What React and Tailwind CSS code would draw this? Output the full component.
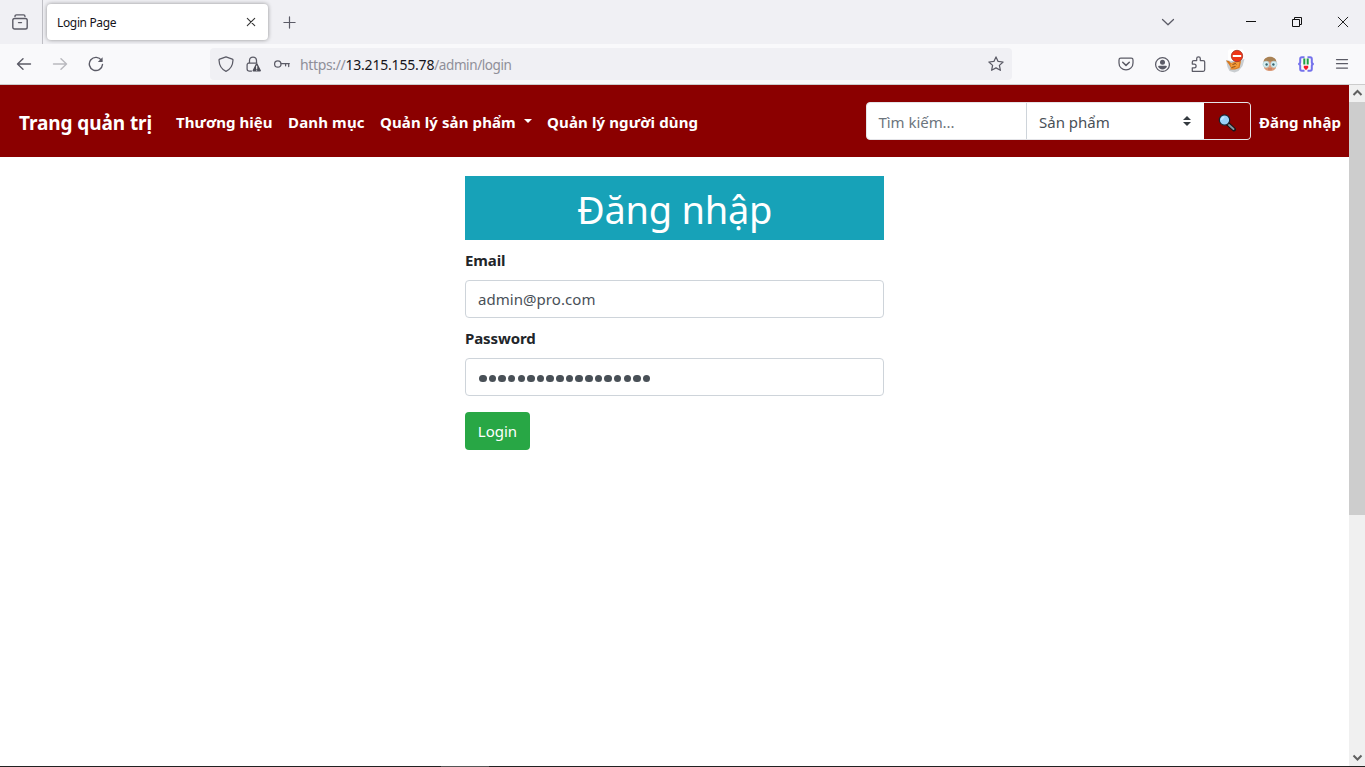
import React from "react";

function Icon({ children, className = "" }) {
  return (
    <svg
      viewBox="0 0 16 16"
      className={`block size-4 shrink-0 ${className}`}
      fill="none"
      stroke="#5b5b66"
      strokeWidth="1.25"
      strokeLinecap="round"
      strokeLinejoin="round"
    >
      {children}
    </svg>
  );
}

function TabStrip() {
  return (
    <div className="flex h-11 items-center bg-[#f0f0f4]">
      <div className="flex h-11 w-[43px] items-center border-r border-[#bfbfc5] pl-3">
        <Icon>
          <path d="M3 2.500c0-1 .6-1.600 1.500-1.600h7c.9 0 1.500.6 1.500 1.600" strokeWidth="1.400" />
          <rect x=".8" y="4.500" width="14.400" height="10.500" rx="1.800" strokeWidth="1.400" />
          <path d="M6.500 8.600h3" strokeWidth="1.400" />
        </Icon>
      </div>
      <div className="ml-1 flex h-9 w-[221px] items-center rounded bg-white pr-[9px] pl-[10px] shadow-[0_0_4px_rgba(0,0,0,0.4)]">
        <span className="w-[70px] pt-0.5 text-[12px] leading-4 tracking-[-0.35px] whitespace-nowrap text-[#15141a]">
          Login Page
        </span>
        <Icon className="ml-auto">
          <path d="M4.300 4.300l7.400 7.400M11.700 4.300l-7.400 7.400" stroke="#333" strokeWidth="1.100" />
        </Icon>
      </div>
      <Icon className="ml-[13px]">
        <path d="M8.500 2.900v11.200M2.900 8.500h11.200" strokeWidth="1.200" />
      </Icon>
      <div className="ml-auto flex items-center pr-[14px]">
        <Icon className="mr-[67px]">
          <path d="M2.500 5.500L8 10.800l5.500-5.300" />
        </Icon>
        <Icon className="mr-[30px]">
          <path d="M3 7.500h10" stroke="#111" strokeWidth="1" strokeLinecap="butt" />
        </Icon>
        <Icon className="mr-[30px]">
          <path
            d="M3.500 5.500h7v7h-7zM5.500 5.500v-2h7v7h-2"
            stroke="#111"
            strokeWidth="1"
            strokeLinejoin="miter"
            strokeLinecap="butt"
          />
        </Icon>
        <Icon>
          <path d="M3.200 3.200l9.600 9.600M12.800 3.200l-9.600 9.600" stroke="#222" strokeWidth="1" />
        </Icon>
      </div>
    </div>
  );
}

function FoxIcon() {
  return (
    <svg viewBox="0 0 20 24" className="block h-6 w-5 shrink-0">
      <rect x="3" y="0" width="16" height="13" rx="3" fill="#fff" />
      <path d="M1 11l5 1 9-1 4.500-1-2 7-4 5-4 1.500-5-1.500-2-4z" fill="#c9cdd0" />
      <path d="M1 11.500l3 .5 2 2 9-2.500 1 1-1.500 6.500-4.500 1.500H5l1-1.500-2-3.500z" fill="#d8781e" />
      <path d="M5.500 14.500l9-2-1 5.500-3.500 1.500H6z" fill="#f39a38" />
      <path d="M7.500 15.500l3-1 .8 1M6.500 18.500l4-1" stroke="#7c4214" strokeWidth=".9" fill="none" />
      <circle cx="12" cy="7" r="5.700" fill="#ee3416" stroke="#a13225" strokeWidth=".8" />
      <rect x="7.800" y="6" width="8.400" height="2" fill="#fff" />
    </svg>
  );
}

function FaceIcon() {
  return (
    <svg viewBox="0 0 16 16" className="block size-4 shrink-0">
      <path d="M2 6c0-3 3-5 6-5s6 2 6 5v5c0 2.500-3 4-6 4s-6-1.500-6-4z" fill="#dc9b78" />
      <path d="M1.500 6.500C1.500 3 4.500.8 8 .8s6.500 2.200 6.500 5.700L11 5 8 5.500 5 5z" fill="#a88255" />
      <circle cx="4.100" cy="8.300" r="3.100" fill="#d9f0f3" stroke="#b5d3d9" strokeWidth=".8" />
      <circle cx="11.900" cy="8.300" r="3.100" fill="#d9f0f3" stroke="#b5d3d9" strokeWidth=".8" />
      <circle cx="4.600" cy="8.500" r="1.200" fill="#35636f" />
      <circle cx="11.400" cy="8.500" r="1.200" fill="#35636f" />
      <path d="M6 13h4" stroke="#bb6e55" />
    </svg>
  );
}

function BracesIcon() {
  return (
    <svg viewBox="0 0 16 16" className="block size-4 shrink-0" fill="none">
      <path
        d="M6.500 1.200H3.800C2.600 1.200 2.200 1.900 2.200 3v3.200C2.200 7.400 1.600 8 .2 8c1.400 0 2 .6 2 1.800V13c0 1.100.4 1.800 1.600 1.800h2.700M9.500 1.200h2.700c1.200 0 1.600.7 1.600 1.800v3.200c0 1.200.6 1.800 2 1.800-1.400 0-2 .6-2 1.800V13c0 1.100-.4 1.800-1.600 1.800H9.500"
        stroke="#7471ec"
        strokeWidth="2"
      />
      <path d="M6.300 2.500v6M9.700 2.500v6" stroke="#1fa044" strokeWidth="2" />
      <path d="M5.800 9.800h4.400v2L8 14.200 5.800 11.800z" fill="#f5152a" />
    </svg>
  );
}

function Toolbar() {
  return (
    <div className="flex h-[41px] items-center border-b border-[#ccc] bg-[#f9f9fb] pr-[15px] pl-4">
      <Icon>
        <path d="M14.500 8H1.600M7 2.700L1.500 8 7 13.300" strokeWidth="1.400" />
      </Icon>
      <Icon className="ml-5 opacity-40">
        <path d="M1.500 8h12.900M9 2.700L14.500 8 9 13.300" strokeWidth="1.400" />
      </Icon>
      <Icon className="ml-5">
        <path d="M13.500 4.400A6.600 6.600 0 1 0 14.500 8.500" strokeWidth="1.400" />
        <path d="M14.600 1.300v4.800H9.800z" fill="#5b5b66" stroke="none" />
      </Icon>
      <div className="ml-[106px] flex h-8 w-[802px] items-center rounded bg-[#f0f0f4] px-2">
        <Icon>
          <path d="M8 .8l6.300 2.300c.5.200.7.500.7 1C14.800 9.300 12.500 13.500 8 15.300 3.500 13.500 1.200 9.300 1 4.100c0-.5.2-.8.700-1z" />
        </Icon>
        <Icon className="ml-[11px]">
          <path d="M4.500 7V4.500a3.500 3.500 0 0 1 7 0V7M6.500 15H4a1.900 1.900 0 0 1-1.900-1.900V9A1.900 1.900 0 0 1 4 7h8" />
          <path
            d="M11.700 7.400c.4 0 .7.200.9.500l3.200 6.300c.4.700 0 1.400-.8 1.400H8.500c-.8 0-1.200-.7-.8-1.400l3.100-6.300c.2-.3.500-.5.900-.5z"
            fill="#4d4d57"
            stroke="none"
          />
          <path d="M11.700 10v2.400M11.700 14v.1" stroke="#fff" strokeWidth="1.100" />
        </Icon>
        <Icon className="ml-[13px]">
          <circle cx="3.800" cy="8" r="3.200" />
          <path d="M7 7.600h8.300M14.700 7.600v3M11.600 7.600v2.200" />
        </Icon>
        <span className="ml-[10px] flex w-[220px] pt-0.5 text-[14px] leading-5 whitespace-nowrap text-[#8f8f99]">
          <span className="tracking-[-0.35px]">https://</span>
          <span className="tracking-[-0.2px] text-[#15141a]">13.215.155.78</span>
          <span className="text-[13.5px] tracking-[-0.4px]">/admin/login</span>
        </span>
        <Icon className="ml-auto">
          <path d="M8 .9l2.100 4.500 5 .6-3.700 3.400 1 4.900L8 11.900l-4.400 2.400 1-4.900L.9 6l5-.6z" />
        </Icon>
      </div>
      <div className="ml-auto flex items-center">
        <Icon>
          <path d="M2.700 2.200h10.600c1 0 1.700.7 1.700 1.700v3c0 4-3 7-7 7s-7-3-7-7v-3c0-1 .7-1.700 1.700-1.700z" />
          <path d="M4.700 6.200L8 9.400l3.300-3.200" strokeWidth="1.500" />
        </Icon>
        <Icon className="ml-5">
          <circle cx="8.500" cy="8.500" r="6.900" />
          <circle cx="8.500" cy="6.200" r="2.500" fill="#5b5b66" stroke="none" />
          <path d="M4.100 10.500c0-.5.400-.8.900-.8h7c.5 0 .9.300.9.800-.6 1.700-2.300 2.900-4.400 2.900s-3.800-1.200-4.400-2.900z" fill="#5b5b66" stroke="none" />
        </Icon>
        <Icon className="ml-5">
          <path d="M2.300 15.300h10.900c.9 0 1.500-.6 1.500-1.500V6c0-.9-.6-1.500-1.500-1.500h-2.900V2.600a1.800 1.800 0 0 0-3.600 0v1.900H3.800c-.9 0-1.500.6-1.500 1.500v2h1.900a1.900 1.900 0 0 1 0 3.800H2.300z" />
        </Icon>
        <div className="-mt-1.5 ml-[19px] flex">
          <FoxIcon />
        </div>
        <div className="ml-[17px]">
          <FaceIcon />
        </div>
        <div className="ml-5">
          <BracesIcon />
        </div>
        <Icon className="ml-5">
          <path d="M2.500 3.500h11M2.500 7.700h11M2.500 12h11" />
        </Icon>
      </div>
    </div>
  );
}

function Navbar() {
  return (
    <nav className="flex h-[72px] items-center bg-[#8b0000] pl-[19px] text-[15px] leading-6 font-bold whitespace-nowrap text-white">
      <span className="w-[157px] pt-[3px] text-[19px] tracking-[-0.08px]">Trang quản trị</span>
      <span className="w-[112px] pt-px tracking-[0.05px]">Thương hiệu</span>
      <span className="w-[92px] pt-px tracking-[0.15px]">Danh mục</span>
      <span className="w-[144px] pt-px tracking-[0.1px]">Quản lý sản phẩm</span>
      <span className="mr-[15px] h-0 w-2 border-x-4 border-t-4 border-x-transparent border-t-white" />
      <span className="pt-px tracking-[0.13px]">Quản lý người dùng</span>
      <div className="mr-2 ml-auto flex h-[38px] w-[385px] overflow-hidden rounded border border-[#e4e4e8] bg-white font-normal">
        <div className="flex w-[160px] items-center border-r border-[#ced4da] pt-px pl-[11.5px] tracking-[-0.05px] text-[#6c757d]">
          Tìm kiếm...
        </div>
        <div className="flex w-[177px] items-center pt-px pr-[13px] pl-3 text-[#495057]">
          Sản phẩm
          <svg viewBox="0 0 8 10" className="-mt-0.5 ml-auto h-2.5 w-2">
            <path d="M4 0l4 4H0zM4 10L0 6h8z" fill="#343a40" />
          </svg>
        </div>
        <div className="flex flex-1 items-center justify-center bg-[#8b0000] pt-1">
          <svg viewBox="0 0 18 18" className="size-[18px]">
            <path d="M10 10l6 5.500" stroke="#14171b" strokeWidth="4" strokeLinecap="round" />
            <path d="M11 11l4.500 4" stroke="#8795a1" strokeWidth="1.900" strokeLinecap="round" />
            <circle cx="6.500" cy="6" r="5.200" fill="#9ad0f8" stroke="#16212b" strokeWidth="1.200" />
            <path d="M3.500 6c.2-1.500 1.300-2.600 2.800-2.800" stroke="#c4e7ff" strokeWidth="1.500" fill="none" />
          </svg>
        </div>
      </div>
      <span className="w-[90px] pt-px tracking-[0.12px]">Đăng nhập</span>
    </nav>
  );
}

function LoginForm() {
  return (
    <main className="ml-[465px] flex w-[419px] flex-col pt-[19px] text-[15px] leading-6 text-[#212529]">
      <h1 className="flex h-16 items-center justify-center bg-[#17a2b8] pt-0.5 text-[38px] leading-none tracking-[-0.25px] text-white">
        Đăng nhập
      </h1>
      <label className="mt-2 h-8 font-bold tracking-[-0.1px]">Email</label>
      <div className="flex h-[38px] items-center rounded border border-[#ced4da] px-3 tracking-[0.05px] text-[#495057]">
        admin@pro.com
      </div>
      <label className="mt-2 h-8 font-bold tracking-[-0.1px]">Password</label>
      <div className="flex h-[38px] items-center rounded border border-[#ced4da] pt-[3px] pl-[13px]">
        <div className="flex gap-[2.15px]">
          {Array.from({ length: 18 }, (_, i) => (
            <span key={i} className="size-[7.5px] rounded-full bg-[#495057]" />
          ))}
        </div>
      </div>
      <button className="mt-4 h-[38px] w-[65px] rounded bg-[#28a745] text-white">Login</button>
    </main>
  );
}

function Scrollbar() {
  return (
    <div className="flex w-4 flex-col bg-[#f0f0f0]">
      <svg viewBox="0 0 16 17" className="h-[17px] w-4">
        <path d="M4.500 10L8.500 6l4 4" stroke="#606060" strokeWidth="2" fill="none" />
      </svg>
      <div className="h-[413px] bg-[#cdcdcd]" />
      <svg viewBox="0 0 16 17" className="mt-auto h-[17px] w-4">
        <path d="M4.500 6.500l4 4 4-4" stroke="#606060" strokeWidth="2" fill="none" />
      </svg>
    </div>
  );
}

export default function App() {
  return (
    <div className="flex h-[767px] w-[1365px] flex-col overflow-hidden bg-white font-['Noto_Sans',sans-serif]">
      <TabStrip />
      <Toolbar />
      <div className="flex min-h-0 flex-1">
        <div className="min-w-0 flex-1">
          <Navbar />
          <LoginForm />
        </div>
        <Scrollbar />
      </div>
      <div className="flex h-px shrink-0 bg-[#222]">
        <div className="ml-[441px] w-12 bg-[#555]" />
      </div>
    </div>
  );
}
